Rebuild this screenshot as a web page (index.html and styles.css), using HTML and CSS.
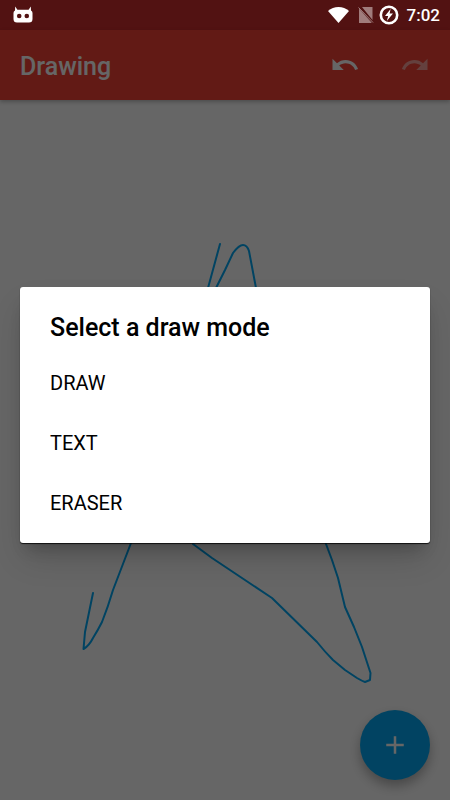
FILE: index.html
```html
<!doctype html>
<html lang="en">
  <head>
    <meta charset="UTF-8" />
    <meta name="viewport" content="width=device-width, initial-scale=1.0" />
    <title>Drawing</title>
    <link rel="stylesheet" href="styles.css">
  </head>
  <body>
    <div class="status-bar">
      <svg class="robot-icon" width="20" height="18" viewBox="0 0 20 18" aria-hidden="true">
        <path fill="#fff" d="M2.2 0.5 L4.4 3.8 H15.6 L17.8 0.5 L18 4.4 Q19.5 5 19.5 7 V13 Q19.5 16.5 16 16.5 H4 Q0.5 16.5 0.5 13 V7 Q0.5 5 2 4.4 Z" />
        <circle cx="6.2" cy="10" r="2.3" fill="#521212" />
        <circle cx="13.8" cy="10" r="2.3" fill="#521212" />
      </svg>
      <div class="status-icons">
        <svg class="wifi-icon" width="21" height="16" viewBox="0 0 21 16" aria-hidden="true">
          <path fill="#fff" d="M10.5 16 L0 4 Q4.5 0 10.5 0 Q16.5 0 21 4 Z" />
        </svg>
        <svg class="sim-icon" width="16" height="16" viewBox="0 0 16 16" aria-hidden="true">
          <path fill="#fff" fill-opacity="0.45" d="M4 0 H14.5 V13 Z M1 1.5 L13.5 15.5 V16 H1 Z" />
          <path stroke="#fff" stroke-opacity="0.45" stroke-width="1" d="M0.5 0.5 L15 15.5" />
        </svg>
        <svg class="battery-icon" width="20" height="20" viewBox="0 0 20 20" aria-hidden="true">
          <circle cx="10" cy="10" r="8.2" fill="none" stroke="#fff" stroke-width="2.6" />
          <path fill="#fff" d="M11.6 4 L6 11 H9.2 L7.8 16 L14 8.6 H10.6 Z" />
        </svg>
        <span class="clock">7:02</span>
      </div>
    </div>

    <header class="toolbar">
      <h1 class="toolbar-title">Drawing</h1>
      <div class="toolbar-actions">
        <svg class="action-icon" width="30" height="30" viewBox="0 0 24 24" aria-hidden="true">
          <path d="M12.5 8c-2.65 0-5.05.99-6.9 2.6L2 7v9h9l-3.62-3.62c1.39-1.16 3.16-1.88 5.12-1.88 3.54 0 6.55 2.31 7.6 5.5l2.37-.78C21.08 11.03 17.15 8 12.5 8z" />
        </svg>
        <svg class="action-icon action-off" width="30" height="30" viewBox="0 0 24 24" aria-hidden="true">
          <path d="M18.4 10.6C16.55 8.99 14.15 8 11.5 8c-4.65 0-8.58 3.03-9.96 7.22L3.9 16c1.05-3.19 4.05-5.5 7.6-5.5 1.95 0 3.73.72 5.12 1.88L13 16h9V7l-3.6 3.6z" />
        </svg>
      </div>
    </header>

    <main class="canvas">
      <svg class="sketch" viewBox="0 100 450 700" aria-hidden="true">
        <path d="M220 244 L208 288 M93 593 L85 632 L83.5 649 Q89 646 93 638 Q98 630 102 622 Q108 607 113 590 L131 543 M216 288 L225 270 L233 253 Q239 245 243 245 Q247 245 249 251 L256 288 M193 544 L212 558 L272 598 L317 642 Q325 652 333 660 L345 670 L357 678 Q362 681 365 682 L370 680 L370.5 673 L362 647 L354 627 L345 607 L338 578 L332 560 L326 544" />
      </svg>
      <button class="fab" type="button" aria-label="Add">
        <svg width="30" height="30" viewBox="0 0 24 24" aria-hidden="true">
          <path fill="#fff" d="M19 13h-6v6h-2v-6H5v-2h6V5h2v6h6v2z" />
        </svg>
      </button>
    </main>

    <div class="scrim">
      <div class="dialog" role="dialog">
        <h2 class="dialog-title">Select a draw mode</h2>
        <ul class="mode-list">
          <li>DRAW</li>
          <li>TEXT</li>
          <li>ERASER</li>
        </ul>
      </div>
    </div>
  </body>
</html>
```

FILE: styles.css
```css
* {
  box-sizing: border-box;
}

body {
  font-family: 'Roboto', 'Liberation Sans', sans-serif;
  margin: 0;
  height: 800px;
  display: flex;
  flex-direction: column;
  overflow: hidden;
  position: relative;
}

.status-bar {
  height: 30px;
  background: #521212;
  display: flex;
  align-items: center;
  justify-content: space-between;
  padding: 0 10px 0 13px;
  flex-shrink: 0;
}

.status-icons {
  display: flex;
  align-items: center;
}

.wifi-icon {
  margin-right: 9px;
}

.sim-icon {
  margin-right: 5px;
}

.battery-icon {
  margin-right: 8px;
}

.clock {
  color: #fff;
  font-size: 17px;
  font-weight: 500;
}

.toolbar {
  height: 70px;
  background: #f44336;
  display: flex;
  align-items: center;
  justify-content: space-between;
  padding: 2px 20px 0;
  flex-shrink: 0;
  position: relative;
  z-index: 1;
  box-shadow: 0 2px 4px rgba(0, 0, 0, 0.25);
}

.toolbar-title {
  margin: 0;
  color: #fff;
  font-size: 25px;
  font-weight: 500;
}

.toolbar-actions {
  display: flex;
  gap: 40px;
  margin-top: -2px;
}

.action-icon {
  fill: #fff;
  display: block;
}

.action-off {
  opacity: 0.5;
}

.canvas {
  flex: 1;
  background: #fff;
  position: relative;
}

.sketch {
  position: absolute;
  top: 0;
  left: 0;
  width: 100%;
  height: 100%;
  fill: none;
  stroke: #03a9f4;
  stroke-width: 2;
  stroke-linejoin: round;
  stroke-linecap: round;
}

.fab {
  position: absolute;
  right: 20px;
  bottom: 20px;
  width: 70px;
  height: 70px;
  border: none;
  border-radius: 50%;
  background: #03a9f4;
  display: flex;
  align-items: center;
  justify-content: center;
  padding: 0;
  box-shadow: 0 6px 12px rgba(0, 0, 0, 0.3);
}

.scrim {
  position: absolute;
  top: 30px;
  left: 0;
  right: 0;
  bottom: 0;
  z-index: 2;
  background: rgba(0, 0, 0, 0.6);
  display: flex;
  align-items: center;
  justify-content: center;
}

.dialog {
  width: 410px;
  height: 256px;
  background: #fff;
  border-radius: 3px;
  padding-top: 26px;
  box-shadow: 0 1px 1px rgba(0, 0, 0, 0.8), 0 11px 15px -7px rgba(0, 0, 0, 0.2), 0 18px 30px -4px rgba(0, 0, 0, 0.16);
}

.dialog-title {
  margin: 0 0 10px;
  padding-left: 30px;
  color: #000;
  font-size: 25px;
  font-weight: 500;
  line-height: 30px;
}

.mode-list {
  list-style: none;
  margin: 0;
  padding: 0;
}

.mode-list li {
  height: 60px;
  padding-left: 30px;
  color: #000;
  font-size: 20px;
  line-height: 60px;
}
```
